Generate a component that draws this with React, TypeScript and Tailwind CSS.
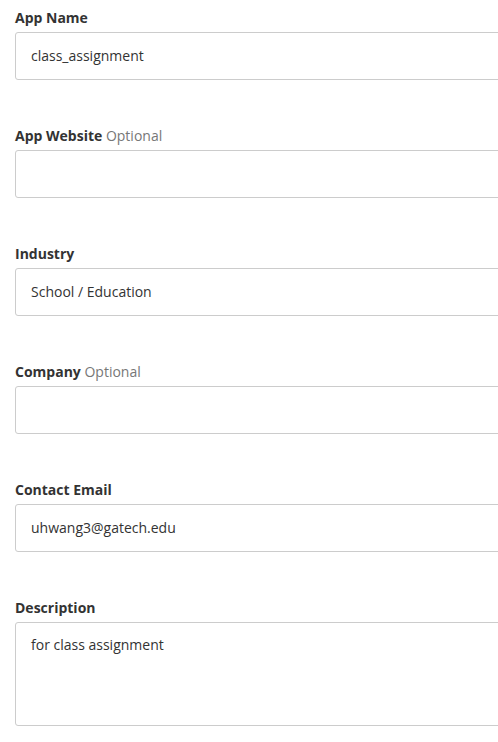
const fields = [
  { label: "App Name", value: "class_assignment" },
  { label: "App Website", optional: true, value: "" },
  { label: "Industry", value: "School / Education" },
  { label: "Company", optional: true, value: "" },
  { label: "Contact Email", value: "uhwang3@gatech.edu" },
];

function Label({ text, optional }: { text: string; optional?: boolean }) {
  return (
    <div className="h-5 leading-5 text-[14px] font-bold text-[#333] mb-[4px]">
      {text}
      {optional && <span className="font-normal text-[#777]"> Optional</span>}
    </div>
  );
}

export default function App() {
  return (
    <div
      className="w-[498px] h-[742px] overflow-hidden bg-white pt-[8px] pl-[15px]"
      style={{ fontFamily: '"Open Sans", sans-serif' }}
    >
      {fields.map((f) => (
        <div key={f.label} className="mb-[46px]">
          <Label text={f.label} optional={f.optional} />
          <div className="w-[520px] h-12 border border-[#ccc] rounded-[3px] px-[15px] pb-[1px] flex items-center text-[14px] text-[#333]">
            {f.value}
          </div>
        </div>
      ))}
      <div>
        <Label text="Description" />
        <div className="w-[520px] h-[104px] border border-[#ccc] rounded-[3px] px-[15px] pt-[12px] text-[14px] leading-5 text-[#333]">
          for class assignment
        </div>
      </div>
    </div>
  );
}
